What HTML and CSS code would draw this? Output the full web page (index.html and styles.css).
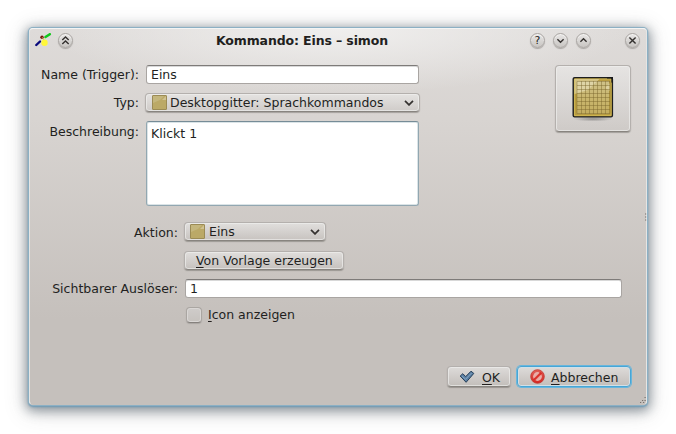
FILE: index.html
```html
<!DOCTYPE html>
<html lang="de">
<head>
<meta charset="utf-8">
<title>Kommando: Eins – simon</title>
<link rel="stylesheet" href="styles.css">
</head>
<body>
<svg width="0" height="0" class="defs" aria-hidden="true">
  <defs>
    <linearGradient id="gold" x1="0" y1="0" x2="0" y2="1"><stop offset="0" stop-color="#cfc28a"/><stop offset=".5" stop-color="#c9b66e"/><stop offset="1" stop-color="#c3ad60"/></linearGradient>
    <radialGradient id="shade"><stop offset="0" stop-color="#555" stop-opacity=".5"/><stop offset="1" stop-color="#555" stop-opacity="0"/></radialGradient>
    <linearGradient id="red" x1="0" y1="0" x2="0" y2="1"><stop offset="0" stop-color="#e0625a"/><stop offset="1" stop-color="#d42622"/></linearGradient>
    <symbol id="board" viewBox="0 0 15 15">
      <rect x=".5" y=".5" width="14" height="14" rx=".5" fill="#bba967" stroke="#9b8b55"/>
      <path d="M1 1h11L8 5 1 8z" fill="#cabd89" opacity=".65"/>
      <path d="M10 5l4-4v4z" fill="#ddd4ad" opacity=".6"/>
    </symbol>
  </defs>
</svg>
<main class="window">
  <header class="titlebar">
    <svg class="logo" width="17" height="14" viewBox="0 0 17 14"><path d="M1.3 12L5 8.5" stroke="#0a0a7c" stroke-width="2.4" stroke-linecap="round"/><path d="M10.5 4L14.8 1.2" stroke="#10c81c" stroke-width="2.5" stroke-linecap="round"/><circle cx="7" cy="4.3" r="1.7" fill="#751010"/><path d="M7 4l2 3" stroke="#c7b33a" stroke-width=".8"/><circle cx="9.5" cy="9.7" r="3.2" fill="#fff73a"/></svg>
    <span class="round"><svg viewBox="0 0 15 15"><path d="M4.3 7l3.2-3 3.2 3M4.3 11l3.2-3 3.2 3"/></svg></span>
    <h1>Kommando: Eins – simon</h1>
    <span class="round help">?</span>
    <span class="round"><svg viewBox="0 0 15 15"><path d="M4.4 6.2l3.1 3 3.1-3"/></svg></span>
    <span class="round"><svg viewBox="0 0 15 15"><path d="M4.4 8.8l3.1-3 3.1 3"/></svg></span>
    <span class="round close"><svg viewBox="0 0 15 15"><path d="M4.4 4.4l6.2 6.2M10.6 4.4l-6.2 6.2"/></svg></span>
  </header>
  <section class="top">
    <div class="form">
      <label>Name (Trigger):</label><div class="field">Eins</div>
      <label>Typ:</label>
      <div class="button combo"><svg class="mini"><use href="#board"/></svg><span class="type">Desktopgitter: Sprachkommandos</span><svg class="arrow" viewBox="0 0 10 6"><path d="M1 .9l4 4 4-4"/></svg></div>
      <label class="described">Beschreibung:</label><div class="field area">Klickt 1</div>
    </div>
    <div class="button icon-button">
      <svg width="46" height="48" viewBox="0 0 46 48">
        <ellipse cx="23" cy="44" rx="20" ry="2.5" fill="url(#shade)"/>
        <rect x="3.2" y="2.7" width="39.2" height="39.2" rx="1.4" fill="#b79b40" stroke="#1d1e20" stroke-width="1.4"/>
        <path d="M4.5 4h36.5v36.5H4.5z" fill="none" stroke="#cdb450"/>
        <path d="M7 6h32v33H7z" fill="url(#gold)"/>
        <path d="M4.5 4h25L18 15 4.5 19z" fill="#f0eacb" opacity=".48"/>
        <path d="M35 13l5-5v8z" fill="#f3edcf" opacity=".4"/>
        <path d="M7 6.5h33v32H7zM11.5 6v33M15.5 6v33M19.5 6v33M23.5 6v33M27.5 6v33M31.5 6v33M35.5 6v33M7 10.5h33M7 14.5h33M7 18.5h33M7 22.5h33M7 26.5h33M7 30.5h33M7 34.5h33" fill="none" stroke="#79672d" stroke-opacity=".5" stroke-width=".9"/>
        <path d="M37 2h6v6l-1.6-.6V3.5H37z" fill="#17181a"/>
      </svg>
    </div>
  </section>
  <section class="form details">
    <label>Aktion:</label>
    <div class="button combo action"><svg class="mini"><use href="#board"/></svg><span>Eins</span><svg class="arrow" viewBox="0 0 10 6"><path d="M1 .9l4 4 4-4"/></svg></div>
    <div class="button template"><span><u>V</u>on Vorlage erzeugen</span></div>
    <label>Sichtbarer Auslöser:</label><div class="field">1</div>
    <div class="check"><i class="box"></i><span><u>I</u>con anzeigen</span></div>
  </section>
  <footer>
    <div class="button ok"><svg width="16" height="14" viewBox="0 0 16 14"><path d="M1.2 6l2.6-2.3 2.9 2.9L12 1.2l2.8 2.2-7.7 8.9z" fill="#5b7fa3" stroke="#253f59" stroke-linejoin="round"/><path d="M2.8 6l3.8 3.3L12.6 3" fill="none" stroke="#86a7c4" stroke-width=".9"/></svg><span><u>O</u>K</span></div>
    <div class="button cancel"><svg width="15" height="15" viewBox="0 0 15 15"><circle cx="7.5" cy="7.5" r="6.8" fill="url(#red)" stroke="#c4332c" stroke-width=".8"/><circle cx="7.5" cy="7.5" r="4.4" fill="#e8b0aa"/><path d="M3.6 11.4l7.8-7.8" stroke="#d93029" stroke-width="3"/><path d="M3.8 9.4l5.6-5.6M5.6 11.2l5.6-5.6" stroke="#f3c8c3" stroke-width=".7"/></svg><span><u>A</u>bbrechen</span></div>
  </footer>
  <svg class="splitter" width="3" height="9" viewBox="0 0 3 9"><path d="M1 1h1.2M1 4h1.2M1 7h1.2" stroke="#77716d" stroke-width="1.2"/></svg>
  <svg class="grip" width="7" height="7" viewBox="0 0 7 7"><path d="M1 5.5h1.2M4 5.5h1.2M3 3.5h1.2M5.5 3.5h1.2M5.5 .5h1.2" stroke="#77716d" stroke-width="1.1"/></svg>
</main>
</body>
</html>
```
FILE: styles.css
```css
* { box-sizing: border-box; }
body { margin: 0; min-height: 434px; padding: 28px 0 0 29px; background: #fff; font: 12.5px/18px "DejaVu Sans", sans-serif; color: #221f1e; }
.defs { position: absolute; }
.window {
  position: relative; width: 618px; height: 377px; padding: 0 15px; border: 1px solid #e5e5e4; border-top-color: #f4f4f4; border-bottom-color: #c5c0bc; border-radius: 4px;
  background: radial-gradient(ellipse 290px 64px at 50% 0, #f0efee, rgba(240,239,238,0)), linear-gradient(#dedbd9 0, #d8d4d1 90px, #c5c0bc 290px);
  box-shadow: 0 0 0 1px #8cb0c4, 0 1px 2px 1px #6b9bb8, 0 3px 11px 3px rgba(60,75,90,.5), 0 4px 22px 2px rgba(80,80,80,.25);
}
.titlebar { display: flex; height: 23px; margin: 0 -9px 0 -10px; padding-bottom: 1px; align-items: center; }
.logo { margin-right: 6px; }
.round { width: 15px; height: 15px; border-radius: 50%; background: linear-gradient(#e8e6e5, #c9c6c3); border: 1px solid #aaa6a3; box-shadow: 0 1px 1px #aaa6a3, inset 0 1px #f5f4f3; }
.round + .round { margin-left: 8px; }
.round svg { display: block; width: 15px; height: 15px; margin: -1px; fill: none; stroke: #34312f; stroke-width: 1.4; }
.round.close { margin-left: 34px; }
.help { font-size: 11px; line-height: 13px; text-align: center; }
h1 { flex: 1; margin: 0; padding: 1px 0 0 1px; font-size: 12.5px; line-height: 20px; letter-spacing: -.12px; text-align: center; }
.top { display: flex; justify-content: space-between; margin-top: 13px; }
.form { display: grid; grid-template-columns: 94px 274px; grid-template-rows: 20px 20px 85px; column-gap: 7px; row-gap: 8px; }
label { text-align: right; line-height: 20px; white-space: nowrap; }
.top label { margin-left: -6px; }
.described { line-height: 22px; }
.field { width: 273px; height: 19px; padding: 0 4px; line-height: 17px; background: #fff; border: 1px solid #a9a5a2; border-top-color: #7e7b79; border-radius: 3px; box-shadow: inset 0 1px #d8d8d8; }
.area { height: 85px; padding-top: 3px; border-color: #92a7b1; border-top-color: #768c97; box-shadow: inset 0 0 0 1px #dbe4e7; }
.button { display: flex; align-items: center; border: 1px solid #b4b0ad; border-bottom-color: #88847f; border-radius: 4px; background: linear-gradient(rgba(235,234,233,.65), rgba(190,186,183,.35)); box-shadow: inset 0 0 0 1px rgba(240,239,238,.65), 0 1px 1px rgba(80,75,70,.38); white-space: nowrap; }
.combo { height: 19px; padding: 0 5px; gap: 4px; }
.top .combo { margin-left: -1px; padding-left: 6px; }
.type { margin-left: -1px; }
.mini { width: 15px; height: 15px; }
.arrow { width: 10px; height: 6px; margin-left: auto; fill: none; stroke: #353230; stroke-width: 1.7; }
.icon-button { width: 76px; height: 67px; justify-content: center; }
.details { grid-template-columns: 133px 438px; grid-template-rows: 20px 20px 20px 17px; column-gap: 6px; row-gap: 8px; margin-top: 16px; }
.details label { line-height: 21px; }
.details .field { width: 437px; margin-left: 1px; margin-top: 1px; }
.action { width: 142px; }
.template, .check { grid-column: 2; }
.template { width: 160px; height: 19px; padding-left: 11px; margin-top: 1px; }
u { text-decoration-thickness: 1px; text-underline-offset: 2px; }
.check { display: flex; align-items: center; gap: 6px; padding-left: 2px; }
.box { width: 16px; height: 16px; border: 1px solid #aaa6a2; border-bottom-color: #85817d; border-radius: 4px; background: linear-gradient(#cfccca, #c6c2be); box-shadow: inset 0 0 0 1px #dad7d5, 0 1px 1px #aaa6a2; }
footer { display: flex; justify-content: flex-end; gap: 6px; margin-top: 43px; }
footer .button { height: 21px; }
footer .button span { padding-top: 2px; }
.ok { width: 64px; padding-left: 11px; gap: 7px; }
.cancel { width: 114px; padding-left: 12px; gap: 6px; border-color: #47a6d6; box-shadow: 0 0 0 1px #69b6dc, inset 0 0 0 1px #d2e0e7; }
.splitter { position: absolute; right: -1px; top: 184px; }
.grip { position: absolute; right: 0; bottom: 0; }
```
